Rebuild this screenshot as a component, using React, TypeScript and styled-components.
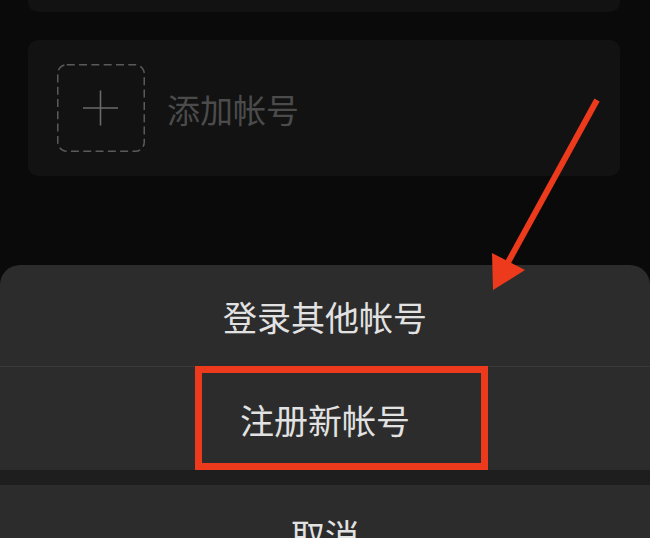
import React from 'react'
import styled, { createGlobalStyle } from 'styled-components'

const GlobalStyle = createGlobalStyle`
  html, body {
    margin: 0;
    padding: 0;
    background: #0a0a0a;
    overflow: hidden;
  }
  body {
    font-family: "Noto Sans CJK SC", "Noto Sans", sans-serif;
  }
`

const Screen = styled.div`
  position: relative;
  width: 650px;
  height: 538px;
  overflow: hidden;
  background: #0a0a0a;
  display: flex;
  flex-direction: column;
`

const AccountList = styled.div`
  display: flex;
  flex-direction: column;
  gap: 28px;
  padding: 0 30px 0 28px;
`

const TopCard = styled.div`
  height: 12px;
  background: #121212;
  border-radius: 0 0 10px 10px;
`

const AddCard = styled.div`
  height: 136px;
  background: #121212;
  border-radius: 10px;
  display: flex;
  align-items: center;
  gap: 22px;
  padding: 0 0 0 29px;
`

const AddLabel = styled.span`
  font-size: 33px;
  color: #4b4b4b;
  letter-spacing: 0;
  line-height: 1;
  margin-top: 2px;
`

const Sheet = styled.div`
  margin-top: 89px;
  background: #2c2c2c;
  border-radius: 20px 20px 0 0;
  display: flex;
  flex-direction: column;
`

const SheetRow = styled.div<{ $divider?: boolean; $height: number }>`
  position: relative;
  height: ${({ $height }) => $height}px;
  display: flex;
  align-items: center;
  justify-content: center;
  border-top: ${({ $divider }) => ($divider ? '1px solid #3a3a3a' : 'none')};
  font-size: 34px;
  color: #e2e2e2;
  line-height: 1;
`

const RowText = styled.span<{ $shift?: number }>`
  margin-top: ${({ $shift }) => $shift ?? 0}px;
`

const SheetGap = styled.div`
  height: 15px;
  background: #1e1e1e;
`

const Highlight = styled.div`
  position: absolute;
  left: 195px;
  top: -1px;
  width: 293px;
  height: 104px;
  box-sizing: border-box;
  border: 7px solid #ee3a1c;
  pointer-events: none;
`

const ArrowLayer = styled.svg`
  position: absolute;
  inset: 0;
  pointer-events: none;
`

const AddIcon = () => (
  <svg width="88" height="88" viewBox="0 0 88 88">
    <rect
      x="0.75"
      y="0.75"
      width="86.5"
      height="86.5"
      rx="9"
      fill="none"
      stroke="#5a5a5a"
      strokeWidth="1.5"
      strokeDasharray="8 4.3"
    />
    <path d="M26 44h35M43.5 26.5v35" stroke="#6a6a6a" strokeWidth="1.6" />
  </svg>
)

const App: React.FC = () => {
  return (
    <>
      <GlobalStyle />
      <Screen>
        <AccountList>
          <TopCard />
          <AddCard>
            <AddIcon />
            <AddLabel>添加帐号</AddLabel>
          </AddCard>
        </AccountList>
        <Sheet>
          <SheetRow $height={101}>
            <RowText $shift={2}>登录其他帐号</RowText>
          </SheetRow>
          <SheetRow $divider $height={103}>
            <RowText $shift={2}>注册新帐号</RowText>
            <Highlight />
          </SheetRow>
          <SheetGap />
          <SheetRow $height={100}>
            <RowText>取消</RowText>
          </SheetRow>
        </Sheet>
        <ArrowLayer width="650" height="538" viewBox="0 0 650 538">
          <line x1="597" y1="100" x2="506" y2="266" stroke="#ee3a1c" strokeWidth="6" />
          <polygon points="493,290 492,253 525,270" fill="#ee3a1c" />
        </ArrowLayer>
      </Screen>
    </>
  )
}

export default App
